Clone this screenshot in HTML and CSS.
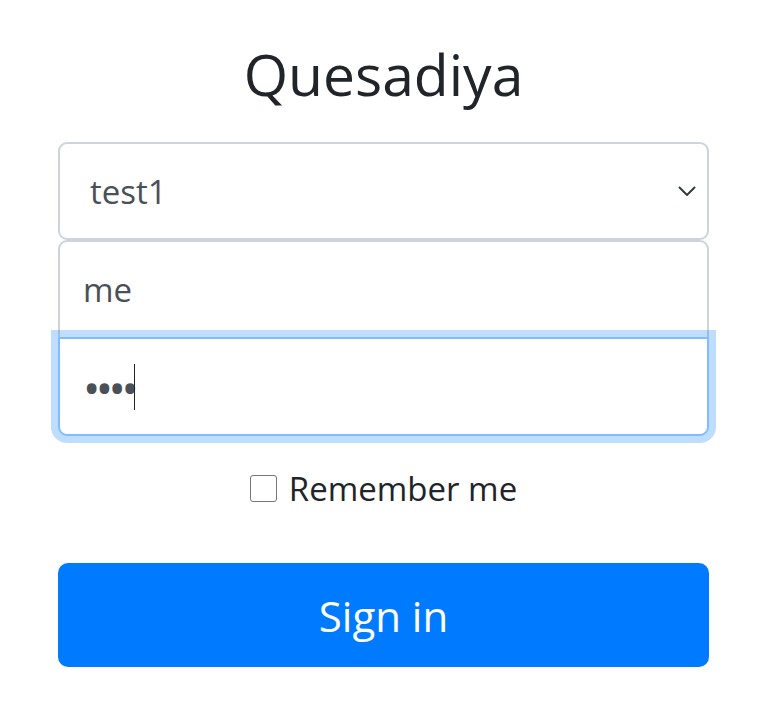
FILE: index.html
```html
<!DOCTYPE html>
<html>
<head>
<meta charset="utf-8">
<link rel="stylesheet" href="styles.css">
</head>
<body>
<form class="signin">
  <h1 class="title">Quesadiya</h1>
  <div class="field select">
    <span class="value">test1</span>
    <svg class="chev" width="18" height="10" viewBox="0 0 18 10"><path d="M1 1 L9 9 L17 1" fill="none" stroke="#343a40" stroke-width="2"/></svg>
  </div>
  <div class="field user"><span class="value">me</span></div>
  <div class="field pass"><span class="dots">••••</span><span class="caret"></span></div>
  <label class="remember"><span class="box"></span><span>Remember me</span></label>
  <button class="btn" type="button">Sign in</button>
</form>
</body>
</html>
```
FILE: styles.css
```css
html, body { margin: 0; padding: 0; background: #fff; }
body { font-family: "Open Sans", "Noto Sans", sans-serif; color: #212529; }
.signin { width: 651px; margin-left: 58px; display: flex; flex-direction: column; }
.title { margin: 40px 0 34px; text-align: center; font-weight: 400; font-size: 57px; line-height: 1.2; color: #212529; }
.field { box-sizing: border-box; height: 98px; border: 2px solid #ced4da; background: #fff; display: flex; align-items: center; padding: 0 23px; font-size: 33px; color: #495057; position: relative; }
.select { border-radius: 9px; padding-left: 30px; }
.chev { margin-left: auto; margin-right: -12px; }
.user { border-radius: 9px 9px 0 0; height: 99px; }
.pass { margin-top: -2px; border-color: #80bdff; border-radius: 0 0 9px 9px; box-shadow: 0 0 0 7px rgba(0,123,255,.25); height: 99px; }
.dots { font-size: 46px; letter-spacing: -4.5px; line-height: 1; }
.caret { display: inline-block; width: 1px; height: 46px; background: #212529; margin-left: 0; }
.remember { display: flex; align-items: center; justify-content: center; gap: 12px; margin-top: 30px; font-size: 33px; color: #212529; }
.box { width: 27px; height: 27px; border: 1px solid #767676; border-radius: 3px; box-sizing: border-box; }
.btn { margin-top: 52px; height: 104px; border: 0; border-radius: 10px; background: #007bff; color: #fff; font-family: inherit; font-size: 42px; }
```
